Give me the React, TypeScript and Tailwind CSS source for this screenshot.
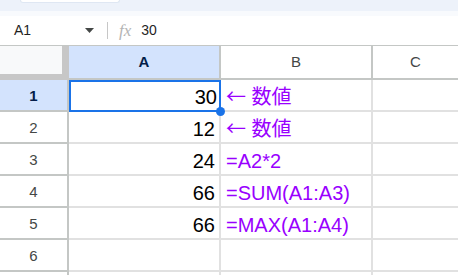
import React from 'react';

const rows = [
  { n: 1, a: '30', b: '← 数値' },
  { n: 2, a: '12', b: '← 数値' },
  { n: 3, a: '24', b: '=A2*2' },
  { n: 4, a: '66', b: '=SUM(A1:A3)' },
  { n: 5, a: '66', b: '=MAX(A1:A4)' },
  { n: 6, a: '', b: '' },
  { n: 0, a: '', b: '' },
];

function CellText({ text }: { text: string }) {
  if (text.startsWith('←')) {
    return (
      <span className="pb-[1px]">
        <span className="font-['Noto_Sans_CJK_JP',sans-serif]">←</span>
        {text.slice(1)}
      </span>
    );
  }
  return <span className="pb-[1px]">{text}</span>;
}

export default function App() {
  return (
    <div className="w-[458px] h-[275px] overflow-hidden bg-white font-['Liberation_Sans','Noto_Sans_CJK_JP',sans-serif]">
      {/* toolbar edge */}
      <div className="h-[16px] bg-[#f8fafd]">
        <div className="h-[11px] bg-[#edf2fa] pl-[20px]">
          <div className="w-[100px] h-[3px] bg-white rounded-b-[3px] border-x border-b border-[#dfe7f3]" />
        </div>
      </div>

      {/* formula bar */}
      <div className="h-[29px] flex items-center text-[14px] text-[#1f1f1f]">
        <div className="w-[107px] flex items-center pl-[14px] pr-[13px]">
          <span className="flex-1">A1</span>
          <svg width="9" height="5" viewBox="0 0 9 5">
            <path d="M0 0h9L4.5 5z" fill="#444746" />
          </svg>
        </div>
        <div className="w-px h-[17px] bg-[#c7c7c7]" />
        <span className="ml-[11px] font-['Liberation_Serif',serif] italic text-[17px] text-[#b4b4b4] leading-none">fx</span>
        <span className="ml-[10px]">30</span>
      </div>

      {/* sheet */}
      <div className="border-t border-[#c4c7c5]">
        {/* column headers */}
        <div className="flex h-[34px] text-[15px] text-[#444746]">
          <div className="w-[69px] bg-[#f8f9fa] border-r-[7px] border-b-[6px] border-[#c7c7c7]" />
          <div className="w-[152px] flex items-center justify-center bg-[#d3e3fd] border-r-2 border-b-2 border-[#c4c7c5] font-bold text-[#041e49]">A</div>
          <div className="w-[152px] flex items-center justify-center border-r-2 border-b-2 border-[#c4c7c5]">B</div>
          <div className="flex-1 flex items-center justify-center border-b-2 border-[#c4c7c5]">C</div>
        </div>

        {rows.map((r, i) => {
          const sel = r.n === 1;
          return (
            <div key={i} className="flex h-[32px]">
              <div
                className={`w-[69px] flex items-center justify-center pt-[2px] text-[15px] border-r-2 border-b-2 border-[#c4c7c5] ${
                  sel ? 'bg-[#d3e3fd] font-bold text-[#041e49]' : 'text-[#444746]'
                }`}
              >
                {r.n > 0 ? r.n : ''}
              </div>
              {sel ? (
                <div className="relative w-[152px] flex items-end justify-end pr-[2px] text-[20px] leading-[23px] text-black border-2 border-[#1a73e8]">
                  <span className="pb-[1px]">{r.a}</span>
                  <div className="absolute left-[145px] top-[25px] w-[9px] h-[9px] rounded-full bg-[#1a73e8] z-10" />
                </div>
              ) : (
                <div className="w-[152px] flex items-end justify-end pr-[4px] text-[20px] leading-[23px] text-black border-r-2 border-b-2 border-[#e1e1e1]">
                  <span className="pb-[1px]">{r.a}</span>
                </div>
              )}
              <div className="w-[152px] flex items-end pl-[5px] text-[20px] leading-[23px] text-[#9900ff] whitespace-nowrap border-r-2 border-b-2 border-[#e1e1e1]">
                <CellText text={r.b} />
              </div>
              <div className="flex-1 border-b-2 border-[#e1e1e1]" />
            </div>
          );
        })}
      </div>
    </div>
  );
}
